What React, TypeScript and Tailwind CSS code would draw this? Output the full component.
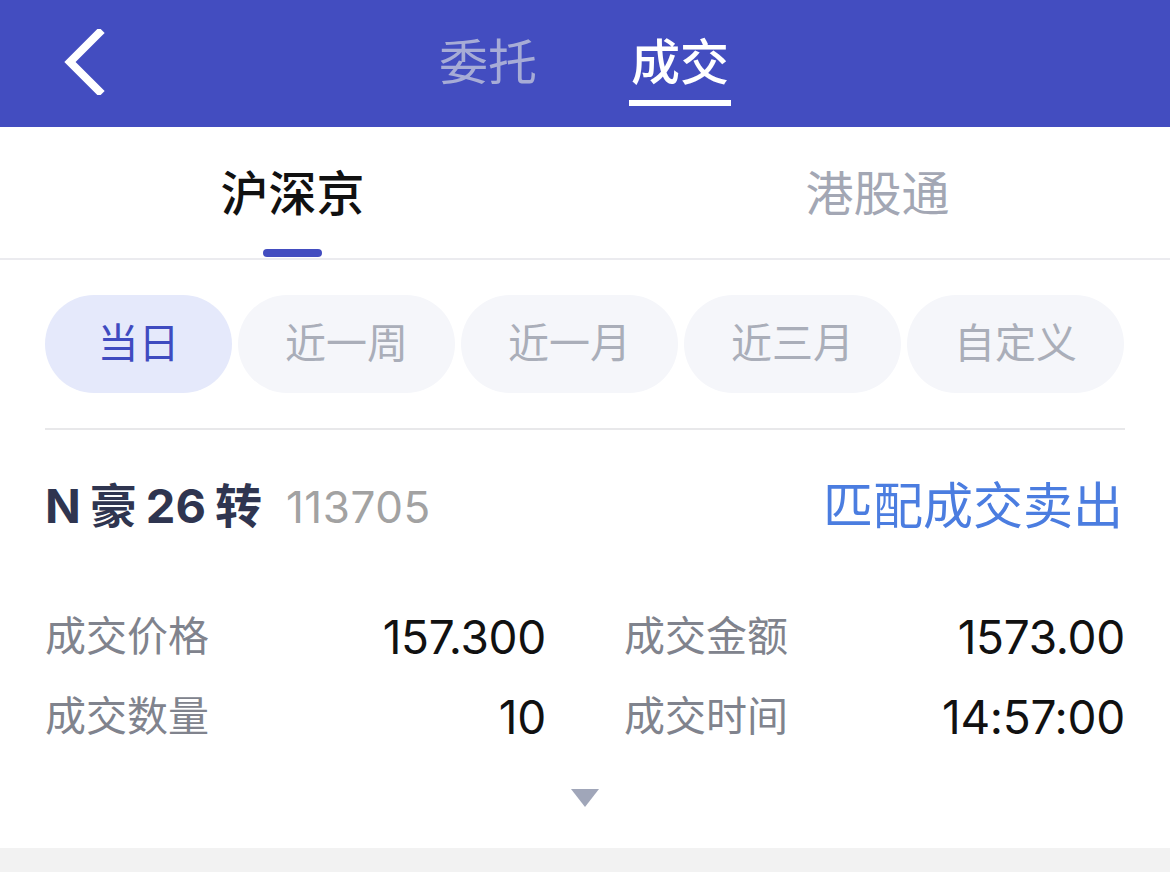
import { useState } from 'react';

const FONT = { fontFamily: 'Inter, "Noto Sans CJK SC", "Noto Sans", sans-serif' };

const periods = ['当日', '近一周', '近一月', '近三月', '自定义'];

const details: [string, string][][] = [
  [['成交价格', '157.300'], ['成交金额', '1573.00']],
  [['成交数量', '10'], ['成交时间', '14:57:00']],
];

function BackIcon() {
  return (
    <svg width="44" height="66" viewBox="0 0 44 66" fill="none">
      <path d="M37 4 L8 33 L37 62" stroke="#ffffff" strokeWidth="8" strokeLinecap="square" />
    </svg>
  );
}

export default function App() {
  const [market, setMarket] = useState(0);
  const [period, setPeriod] = useState(0);

  return (
    <div className="w-[1170px] h-[888px] bg-white overflow-hidden" style={FONT}>
      {/* top bar */}
      <div className="relative h-[127px] bg-[#434dc0] flex items-start justify-center">
        <div className="absolute left-[62px] top-[29px]">
          <BackIcon />
        </div>
        <div className="flex gap-[92px] pt-[33px]">
          <div className="flex flex-col items-center text-[49px] leading-[60px] text-[#a7acd6]">委托</div>
          <div className="flex flex-col items-center">
            <span className="text-[49px] leading-[60px] text-white font-medium">成交</span>
            <span className="mt-[7px] w-[102px] h-[6px] bg-white" />
          </div>
        </div>
      </div>

      {/* market tabs */}
      <div className="flex h-[133px] border-b-2 border-[#ebebef]">
        {['沪深京', '港股通'].map((m, i) => (
          <button key={m} onClick={() => setMarket(i)} className="flex-1 flex flex-col items-center pt-[38px]">
            <span className={`text-[48px] leading-[58px] ${market === i ? 'text-[#111111] font-medium' : 'text-[#a3a7b4]'}`}>{m}</span>
            <span className={`mt-[26px] w-[59px] h-[8px] rounded-full ${market === i ? 'bg-[#434dc0]' : 'bg-transparent'}`} />
          </button>
        ))}
      </div>

      {/* periods */}
      <div className="px-[45px]">
        <div className="flex gap-[6px] mt-[35px]">
          {periods.map((p, i) => (
            <button
              key={p}
              onClick={() => setPeriod(i)}
              className={`h-[98px] rounded-full flex items-center justify-center text-[41px] ${i === 0 ? 'w-[187px]' : 'w-[217px]'} ${period === i ? 'bg-[#e5e9fb] text-[#3f4bc0]' : 'bg-[#f5f6fa] text-[#aaaeb9]'}`}
            >
              {p}
            </button>
          ))}
        </div>
        <div className="mt-[35px] h-[2px] bg-[#e8e8ea]" />

        {/* stock */}
        <div className="flex items-center justify-between h-[154px] pb-[2px]">
          <div className="flex items-baseline gap-[24px]">
            <span className="flex items-baseline gap-[9px] text-[47px] font-bold text-[#2f3550]">
              <span>N</span>
              <span>豪</span>
              <span>26</span>
              <span>转</span>
            </span>
            <span className="text-[44px] text-[#a2a2a2] tracking-[0.5px]">113705</span>
          </div>
          <span className="text-[50px] text-[#4b7de0] pr-[2px]">匹配成交卖出</span>
        </div>

        <div className="flex flex-col gap-[26px] mt-[26px]">
          {details.map((row, r) => (
            <div key={r} className="flex gap-[78px] h-[54px] items-center">
              {row.map(([k, v]) => (
                <div key={k} className="flex-1 flex items-center justify-between">
                  <span className="text-[41px] text-[#80838d]">{k}</span>
                  <span className="text-[46px] text-[#111111] tracking-[-0.3px]">{v}</span>
                </div>
              ))}
            </div>
          ))}
        </div>

        <div className="flex justify-center mt-[45px]">
          <svg width="28" height="18" viewBox="0 0 28 18">
            <path d="M0 0 L28 0 L14 18 Z" fill="#a0a6b9" />
          </svg>
        </div>
      </div>

      <div className="mt-[41px] h-[24px] bg-[#f2f2f2]" />
    </div>
  );
}
